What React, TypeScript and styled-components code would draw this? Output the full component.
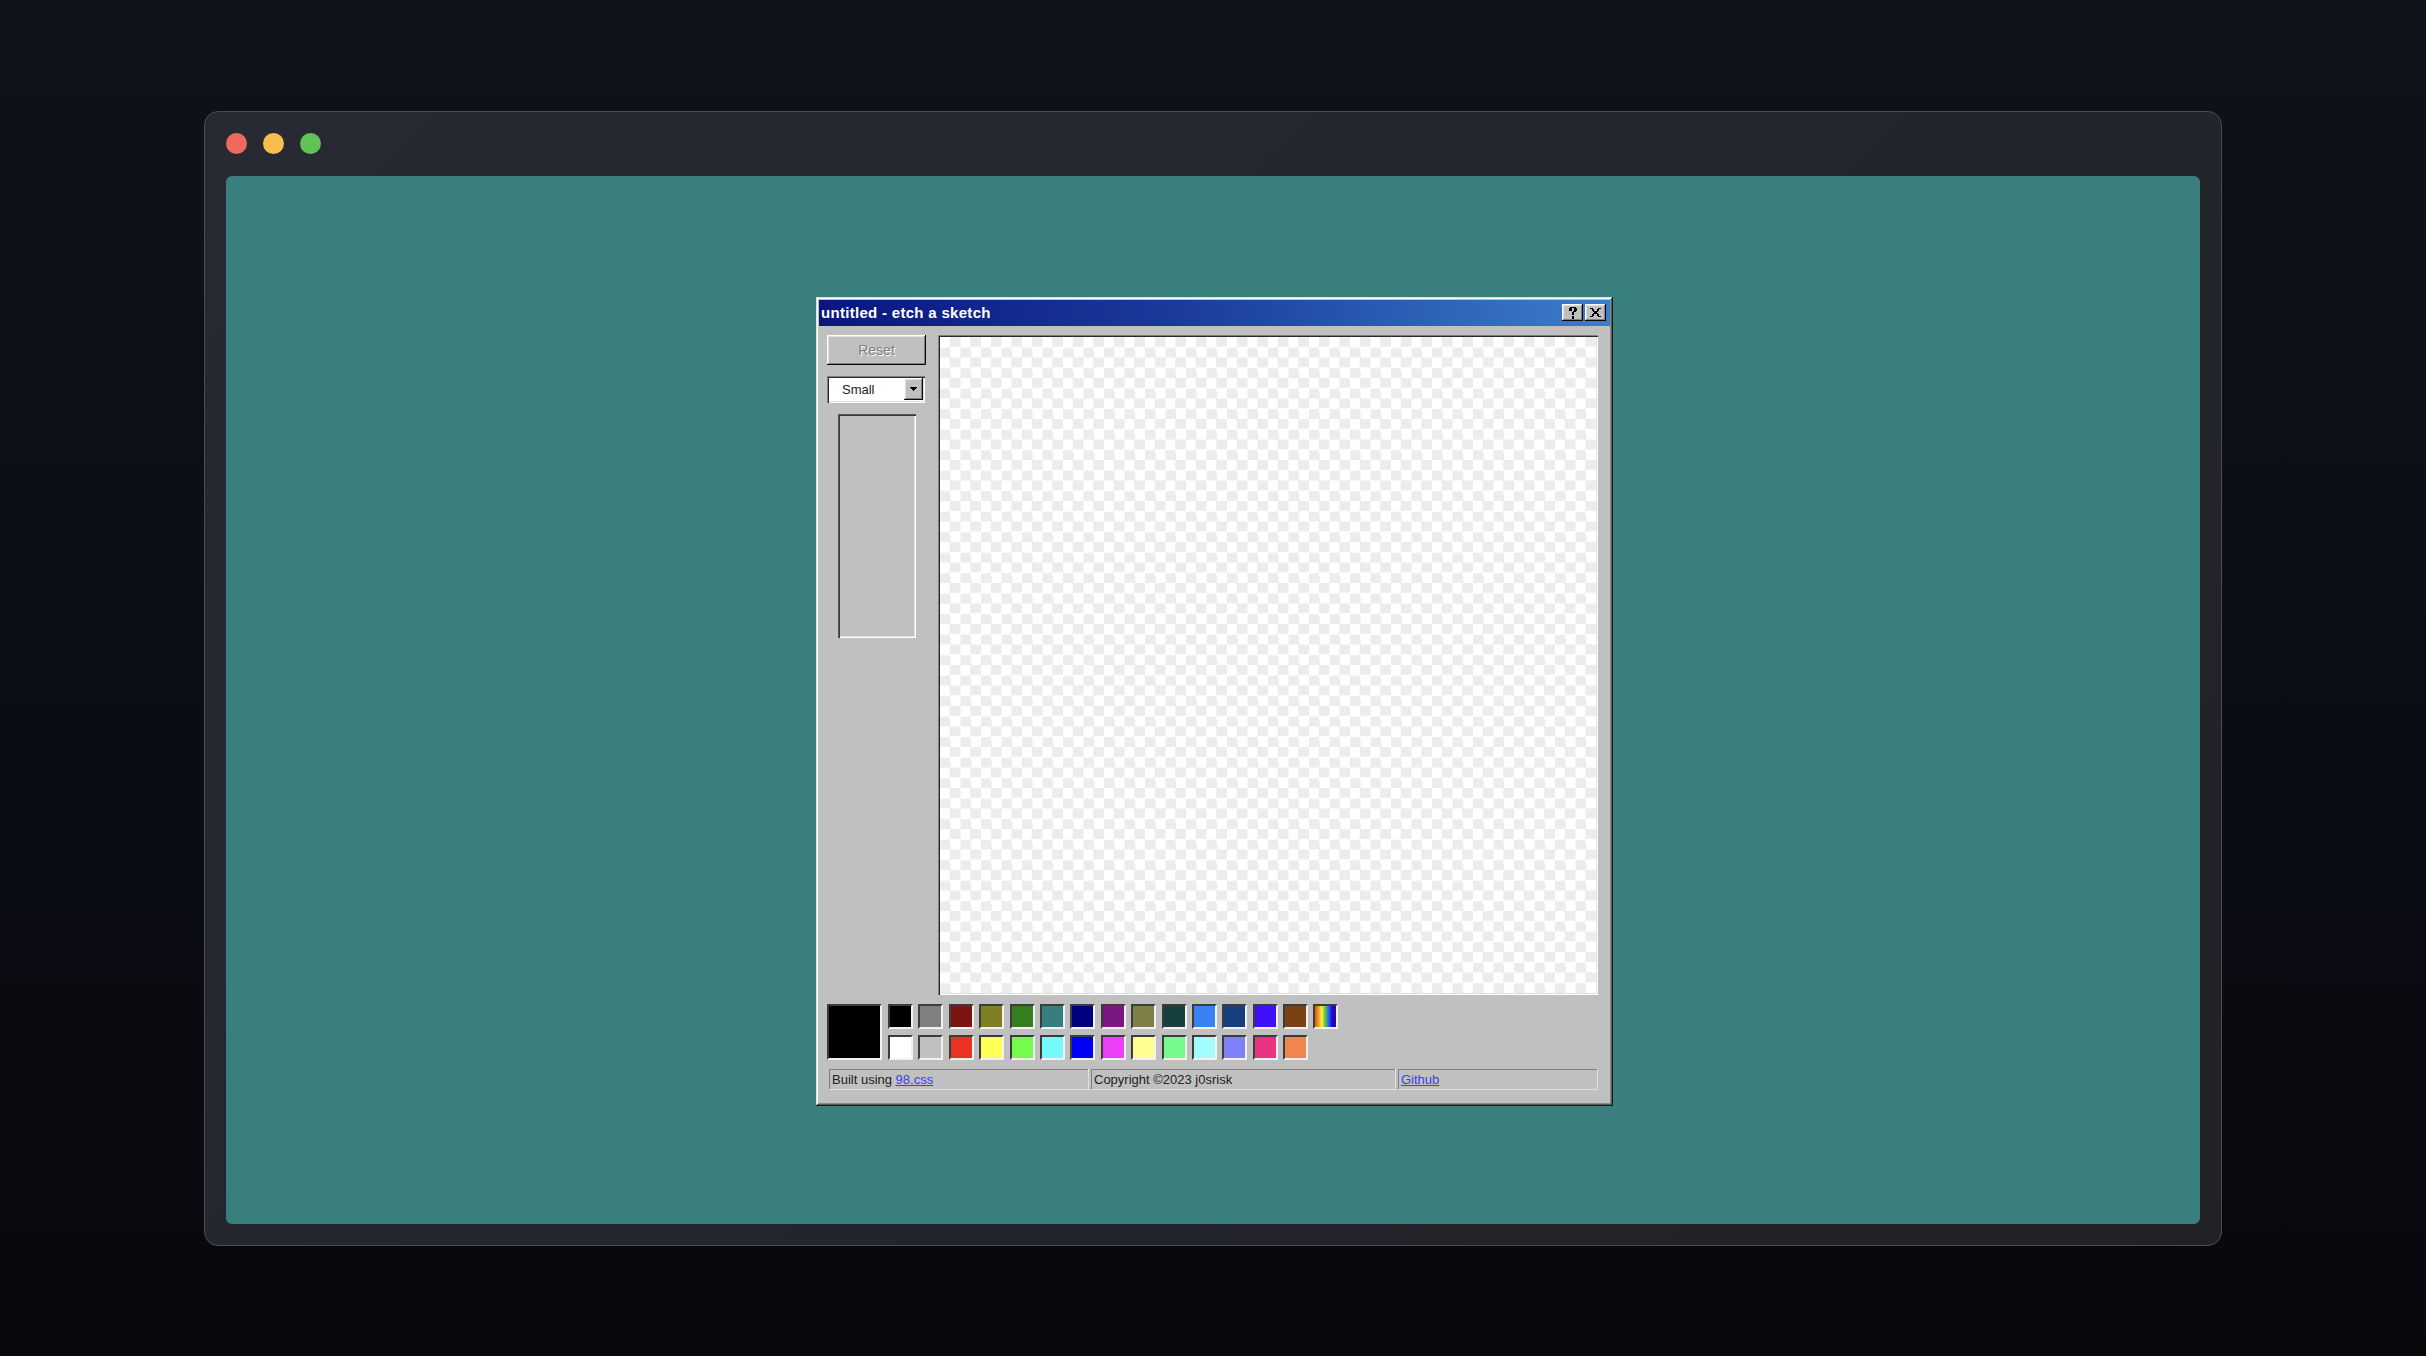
import React from 'react';
import styled, { createGlobalStyle, css } from 'styled-components';

const GlobalStyle = createGlobalStyle`
  html, body {
    margin: 0;
    padding: 0;
    height: 100%;
  }
  body {
    background: linear-gradient(180deg, #0f121b 0%, #0b0d14 60%, #07080c 100%);
    font-family: "Liberation Sans", Arial, sans-serif;
    overflow: hidden;
  }
  #root {
    height: 100%;
  }
`;

const raised = css`
  box-shadow: inset -1px -1px #0a0a0a, inset 1px 1px #ffffff, inset -2px -2px #808080,
    inset 2px 2px #dfdfdf;
`;

const sunken = css`
  box-shadow: inset 1px 1px #808080, inset 2px 2px #2a2a2a, inset -1px -1px #ffffff,
    inset -2px -2px #dfdfdf;
`;

const Page = styled.div`
  width: 100%;
  height: 100vh;
  display: flex;
  align-items: center;
  justify-content: center;
`;

const Frame = styled.div`
  box-sizing: border-box;
  width: 2018px;
  height: 1135px;
  border: 1px solid #4a4c54;
  border-radius: 14px;
  background: linear-gradient(135deg, #272a33 0%, #24262d 50%, #202227 100%);
  display: flex;
  flex-direction: column;
  padding: 0 21px 21px 21px;
`;

const FrameBar = styled.div`
  height: 64px;
  display: flex;
  align-items: center;
  gap: 16px;
`;

const Light = styled.span<{ $color: string }>`
  width: 21px;
  height: 21px;
  border-radius: 50%;
  background: ${(p) => p.$color};
`;

const Desktop = styled.div`
  flex: 1;
  background: #387f7e;
  border-radius: 6px;
  display: flex;
  align-items: center;
  justify-content: center;
  padding: 3px 0 0 3px;
`;

const Window = styled.div`
  box-sizing: border-box;
  width: 797px;
  background: #c0c0c0;
  padding: 3px;
  box-shadow: inset -1px -1px #1a1a1a, inset 1px 1px #dfdfdf, inset -2px -2px #555555,
    inset 2px 2px #ffffff, inset -3px -3px #8a8a8a;
`;

const TitleBar = styled.div`
  height: 26px;
  background: linear-gradient(90deg, #0b1580 0%, #1a3a9c 45%, #3c7dcc 100%);
  display: flex;
  align-items: center;
  justify-content: space-between;
  padding: 0 4px 0 2px;
`;

const TitleText = styled.span`
  color: #ffffff;
  font-weight: bold;
  font-size: 15px;
  letter-spacing: 0.3px;
  white-space: nowrap;
`;

const Controls = styled.div`
  display: flex;
  gap: 2px;
`;

const ControlButton = styled.button`
  width: 21px;
  height: 17px;
  padding: 0;
  border: none;
  background: #c0c0c0;
  ${raised};
  display: flex;
  align-items: center;
  justify-content: center;
`;

const Body = styled.div`
  padding: 9px 12px 13px 8px;
`;

const Main = styled.div`
  display: flex;
  gap: 12px;
  height: 660px;
`;

const Sidebar = styled.div`
  width: 99px;
  display: flex;
  flex-direction: column;
  gap: 11px;
`;

const ResetButton = styled.button`
  height: 30px;
  width: 99px;
  border: none;
  background: #c0c0c0;
  ${raised};
  font-family: "Liberation Sans", Arial, sans-serif;
  font-size: 14px;
  color: #808080;
  text-shadow: 1px 1px 0 #ffffff;
  padding: 0;
`;

const Select = styled.div`
  box-sizing: border-box;
  height: 27px;
  width: 98px;
  background: #ffffff;
  ${sunken};
  display: flex;
  align-items: center;
  justify-content: space-between;
  padding: 0 2px 0 15px;
`;

const SelectText = styled.span`
  font-size: 13px;
  color: #222222;
`;

const DropButton = styled.span`
  width: 19px;
  height: 22px;
  background: #c0c0c0;
  ${raised};
  display: flex;
  align-items: center;
  justify-content: center;
`;

const SliderBox = styled.div`
  width: 78px;
  height: 224px;
  margin-left: 11px;
  background: #c0c0c0;
  box-shadow: inset 1px 1px #555555, inset 2px 2px #3a3a3a, inset -1px -1px #ffffff,
    inset -2px -2px #dfdfdf;
`;

const Canvas = styled.div`
  width: 660px;
  height: 660px;
  box-sizing: border-box;
  ${sunken};
  background-color: #ffffff;
  background-image: conic-gradient(
    #ececec 0 25%,
    #ffffff 0 50%,
    #ececec 0 75%,
    #ffffff 0
  );
  background-size: 20.5px 20.5px;
  background-position: 2px 2px;
`;

const PaletteRow = styled.div`
  margin-top: 9px;
  display: flex;
  gap: 6px;
  height: 56px;
`;

const swatchBorder = css`
  box-sizing: border-box;
  border-style: solid;
  border-width: 2px;
  border-color: #3c3c3c #f2f2f2 #f2f2f2 #3c3c3c;
`;

const CurrentColor = styled.div<{ $color: string }>`
  ${swatchBorder};
  width: 55px;
  height: 56px;
  background: ${(p) => p.$color};
`;

const SwatchGrid = styled.div`
  display: grid;
  grid-template-columns: repeat(15, 25px);
  grid-auto-rows: 25px;
  column-gap: 5.4px;
  row-gap: 6px;
`;

const Swatch = styled.div<{ $color: string }>`
  ${swatchBorder};
  width: 25px;
  height: 25px;
  background: ${(p) => p.$color};
`;

const StatusBar = styled.div`
  margin-top: 9px;
  margin-left: 2px;
  display: grid;
  grid-template-columns: 260px 305px 200px;
  column-gap: 2px;
  height: 21px;
`;

const StatusField = styled.div`
  box-shadow: inset -1px -1px #dfdfdf, inset 1px 1px #808080;
  padding: 0 3px;
  font-size: 13px;
  line-height: 21px;
  color: #222222;
  white-space: nowrap;
  overflow: hidden;
`;

const Link = styled.a`
  color: #3d3df2;
  text-decoration: underline;
`;

const row1 = [
  '#000000',
  '#808080',
  '#7a1410',
  '#807f24',
  '#357f20',
  '#377f7e',
  '#00007f',
  '#7a1780',
  '#807f48',
  '#144040',
  '#3b81f5',
  '#163f7e',
  '#4210f8',
  '#7a4214',
];

const row2 = [
  '#ffffff',
  '#c0c0c0',
  '#ea3323',
  '#fffe54',
  '#75fb4c',
  '#75fbfd',
  '#0000f5',
  '#ea3ff7',
  '#fffe91',
  '#75fb8d',
  '#a1fcfd',
  '#8080f7',
  '#ea3381',
  '#f08650',
];

const rainbow =
  'linear-gradient(90deg, #e8502a 0%, #f0a020 18%, #fff04a 32%, #5ac83c 48%, #2f6ae8 64%, #1010d8 80%, #3a0098 100%)';

const HelpIcon = () => (
  <svg width="8" height="12" viewBox="0 0 6 9" shapeRendering="crispEdges">
    <path
      d="M0 1h2v2H0zM1 0h4v1H1zM4 1h2v2H4zM3 3h2v1H3zM2 4h2v2H2zM2 7h2v2H2z"
      fill="#000"
    />
  </svg>
);

const CloseIcon = () => (
  <svg width="11" height="9" viewBox="0 0 8 7" shapeRendering="crispEdges">
    <path
      d="M0 0h2v1h1v1h2V1h1V0h2v1H7v1H6v1H5v1h1v1h1v1h1v1H6V6H5V5H3v1H2v1H0V6h1V5h1V4h1V3H2V2H1V1H0V0z"
      fill="#000"
    />
  </svg>
);

const ArrowIcon = () => (
  <svg width="7" height="4" viewBox="0 0 7 4" shapeRendering="crispEdges">
    <path d="M0 0h7v1H6v1H5v1H4v1H3V3H2V2H1V1H0z" fill="#000" />
  </svg>
);

export default function App() {
  return (
    <>
      <GlobalStyle />
      <Page>
        <Frame>
          <FrameBar>
            <Light $color="#ee6a5f" />
            <Light $color="#f5be4f" />
            <Light $color="#5fc453" />
          </FrameBar>
          <Desktop>
            <Window>
              <TitleBar>
                <TitleText>untitled - etch a sketch</TitleText>
                <Controls>
                  <ControlButton aria-label="Help">
                    <HelpIcon />
                  </ControlButton>
                  <ControlButton aria-label="Close">
                    <CloseIcon />
                  </ControlButton>
                </Controls>
              </TitleBar>
              <Body>
                <Main>
                  <Sidebar>
                    <ResetButton disabled>Reset</ResetButton>
                    <Select>
                      <SelectText>Small</SelectText>
                      <DropButton>
                        <ArrowIcon />
                      </DropButton>
                    </Select>
                    <SliderBox />
                  </Sidebar>
                  <Canvas />
                </Main>
                <PaletteRow>
                  <CurrentColor $color="#000000" />
                  <SwatchGrid>
                    {row1.map((c, i) => (
                      <Swatch key={'a' + i} $color={c} />
                    ))}
                    <Swatch $color={rainbow} />
                    {row2.map((c, i) => (
                      <Swatch key={'b' + i} $color={c} />
                    ))}
                  </SwatchGrid>
                </PaletteRow>
                <StatusBar>
                  <StatusField>
                    Built using <Link href="#">98.css</Link>
                  </StatusField>
                  <StatusField>Copyright ©2023 j0srisk</StatusField>
                  <StatusField>
                    <Link href="#">Github</Link>
                  </StatusField>
                </StatusBar>
              </Body>
            </Window>
          </Desktop>
        </Frame>
      </Page>
    </>
  );
}
